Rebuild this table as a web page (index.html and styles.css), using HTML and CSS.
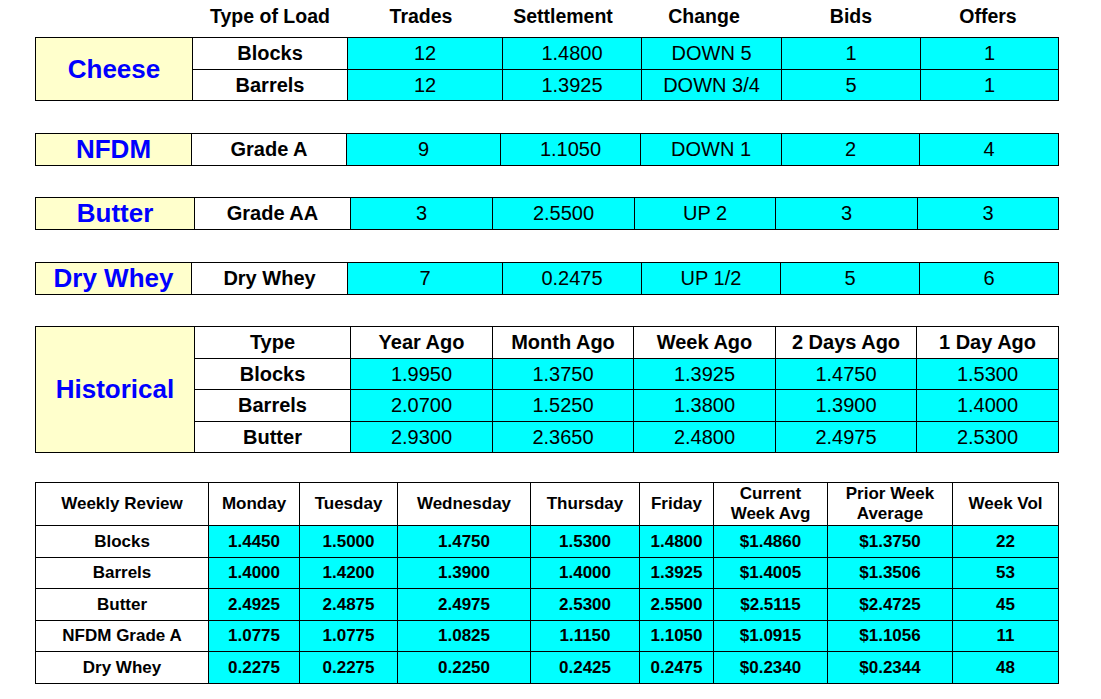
FILE: index.html
```html
<!DOCTYPE html>
<html lang="en">
<head>
<meta charset="utf-8">
<title>Dairy Market Summary</title>
<link rel="stylesheet" href="styles.css">
</head>
<body>
<div class="page">
  <div class="head">
    <span></span>
    <span>Type of Load</span>
    <span>Trades</span>
    <span>Settlement</span>
    <span>Change</span>
    <span>Bids</span>
    <span>Offers</span>
  </div>

  <div class="board cheese">
    <div class="label span2">Cheese</div>
    <div class="kind">Blocks</div>
    <div class="val">12</div>
    <div class="val">1.4800</div>
    <div class="val">DOWN 5</div>
    <div class="val">1</div>
    <div class="val">1</div>
    <div class="kind">Barrels</div>
    <div class="val">12</div>
    <div class="val">1.3925</div>
    <div class="val">DOWN 3/4</div>
    <div class="val">5</div>
    <div class="val">1</div>
  </div>

  <div class="board nfdm">
    <div class="label">NFDM</div>
    <div class="kind">Grade A</div>
    <div class="val">9</div>
    <div class="val">1.1050</div>
    <div class="val">DOWN 1</div>
    <div class="val">2</div>
    <div class="val">4</div>
  </div>

  <div class="board butter">
    <div class="label">Butter</div>
    <div class="kind">Grade AA</div>
    <div class="val">3</div>
    <div class="val">2.5500</div>
    <div class="val">UP 2</div>
    <div class="val">3</div>
    <div class="val">3</div>
  </div>

  <div class="board whey">
    <div class="label">Dry Whey</div>
    <div class="kind">Dry Whey</div>
    <div class="val">7</div>
    <div class="val">0.2475</div>
    <div class="val">UP 1/2</div>
    <div class="val">5</div>
    <div class="val">6</div>
  </div>

  <div class="board hist">
    <div class="label span4">Historical</div>
    <div class="kind">Type</div>
    <div class="kind">Year Ago</div>
    <div class="kind">Month Ago</div>
    <div class="kind">Week Ago</div>
    <div class="kind">2 Days Ago</div>
    <div class="kind">1 Day Ago</div>
    <div class="kind">Blocks</div>
    <div class="val">1.9950</div>
    <div class="val">1.3750</div>
    <div class="val">1.3925</div>
    <div class="val">1.4750</div>
    <div class="val">1.5300</div>
    <div class="kind">Barrels</div>
    <div class="val">2.0700</div>
    <div class="val">1.5250</div>
    <div class="val">1.3800</div>
    <div class="val">1.3900</div>
    <div class="val">1.4000</div>
    <div class="kind">Butter</div>
    <div class="val">2.9300</div>
    <div class="val">2.3650</div>
    <div class="val">2.4800</div>
    <div class="val">2.4975</div>
    <div class="val">2.5300</div>
  </div>

  <div class="board weekly">
    <div class="wh">Weekly Review</div>
    <div class="wh">Monday</div>
    <div class="wh">Tuesday</div>
    <div class="wh">Wednesday</div>
    <div class="wh">Thursday</div>
    <div class="wh">Friday</div>
    <div class="wh">Current<br>Week Avg</div>
    <div class="wh">Prior Week<br>Average</div>
    <div class="wh">Week Vol</div>

    <div class="wh">Blocks</div>
    <div class="wv">1.4450</div>
    <div class="wv">1.5000</div>
    <div class="wv">1.4750</div>
    <div class="wv">1.5300</div>
    <div class="wv">1.4800</div>
    <div class="wv">$1.4860</div>
    <div class="wv">$1.3750</div>
    <div class="wv">22</div>

    <div class="wh">Barrels</div>
    <div class="wv">1.4000</div>
    <div class="wv">1.4200</div>
    <div class="wv">1.3900</div>
    <div class="wv">1.4000</div>
    <div class="wv">1.3925</div>
    <div class="wv">$1.4005</div>
    <div class="wv">$1.3506</div>
    <div class="wv">53</div>

    <div class="wh">Butter</div>
    <div class="wv">2.4925</div>
    <div class="wv">2.4875</div>
    <div class="wv">2.4975</div>
    <div class="wv">2.5300</div>
    <div class="wv">2.5500</div>
    <div class="wv">$2.5115</div>
    <div class="wv">$2.4725</div>
    <div class="wv">45</div>

    <div class="wh">NFDM Grade A</div>
    <div class="wv">1.0775</div>
    <div class="wv">1.0775</div>
    <div class="wv">1.0825</div>
    <div class="wv">1.1150</div>
    <div class="wv">1.1050</div>
    <div class="wv">$1.0915</div>
    <div class="wv">$1.1056</div>
    <div class="wv">11</div>

    <div class="wh">Dry Whey</div>
    <div class="wv">0.2275</div>
    <div class="wv">0.2275</div>
    <div class="wv">0.2250</div>
    <div class="wv">0.2425</div>
    <div class="wv">0.2475</div>
    <div class="wv">$0.2340</div>
    <div class="wv">$0.2344</div>
    <div class="wv">48</div>
  </div>
</div>
</body>
</html>
```

FILE: styles.css
```css
* {
  box-sizing: border-box;
}

body {
  margin: 0;
  background: #ffffff;
  font-family: "Liberation Sans", Arial, sans-serif;
  color: #000000;
}

.page {
  width: 1101px;
  padding-left: 35px;
}

.head {
  display: grid;
  grid-template-columns: 157px 156px 146px 138px 144px 150px 124px;
  height: 37px;
}

.head span {
  font-weight: bold;
  font-size: 19.5px;
  line-height: 32px;
  text-align: center;
}

.board {
  display: grid;
  width: 1024px;
  border-left: 1px solid #000;
  border-top: 1px solid #000;
}

.board > div {
  display: flex;
  align-items: center;
  justify-content: center;
  text-align: center;
  border-right: 1px solid #000;
  border-bottom: 1px solid #000;
}

.cheese {
  grid-template-columns: 157px 155px 155px 139px 140px 139px 138px;
  grid-template-rows: 32px 31px;
}

.nfdm {
  margin-top: 32px;
  grid-template-columns: 156px 155px 154px 140px 141px 138px 139px;
  grid-template-rows: 32px;
}

.butter {
  margin-top: 31px;
  grid-template-columns: 159px 156px 142px 142px 141px 142px 141px;
  grid-template-rows: 32px;
}

.whey {
  margin-top: 32px;
  grid-template-columns: 156px 156px 155px 139px 139px 139px 139px;
  grid-template-rows: 32px;
}

.hist {
  margin-top: 31px;
  grid-template-columns: 159px 156px 142px 141px 142px 141px 142px;
  grid-template-rows: 32px 31px 32px 31px;
}

.weekly {
  margin-top: 29px;
  grid-template-columns: 173px 91px 98px 133px 109px 74px 114px 125px 106px;
  grid-template-rows: 43px 32px 31px 32px 31px 32px;
}

.span2 {
  grid-row: span 2;
}

.span4 {
  grid-row: span 4;
}

.label {
  background: #ffffcc;
  color: #0000ff;
  font-weight: bold;
  font-size: 26px;
}

.kind {
  background: #ffffff;
  font-weight: bold;
  font-size: 20px;
}

.val {
  background: #00ffff;
  font-size: 20px;
}

.wh {
  background: #ffffff;
  font-weight: bold;
  font-size: 17px;
  line-height: 20px;
}

.wv {
  background: #00ffff;
  font-weight: bold;
  font-size: 17px;
}
```
